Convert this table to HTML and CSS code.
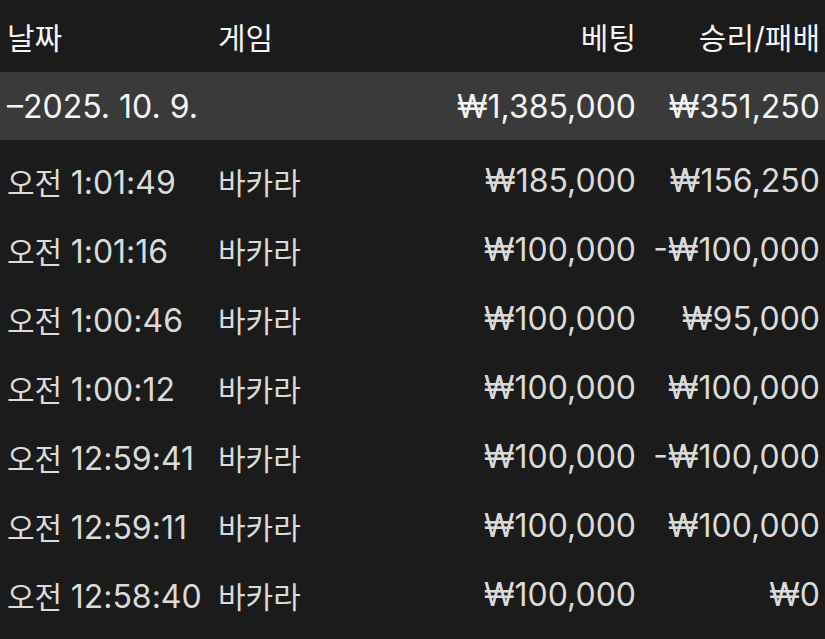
FILE: index.html
```html
<!DOCTYPE html>
<html lang="ko">
<head>
<meta charset="utf-8">
<link rel="stylesheet" href="styles.css">
</head>
<body>
<div class="table">
  <div class="row head">
    <div class="c date">날짜</div>
    <div class="c game">게임</div>
    <div class="c bet">베팅</div>
    <div class="c win">승리/패배</div>
  </div>
  <div class="row group">
    <div class="c date n">–2025. 10. 9.</div>
    <div class="c game"></div>
    <div class="c bet n">₩1,385,000</div>
    <div class="c win n">₩351,250</div>
  </div>
  <div class="rows">
    <div class="row item"><div class="c date">오전 <span class="n">1:01:49</span></div><div class="c game">바카라</div><div class="c bet n">₩185,000</div><div class="c win n">₩156,250</div></div>
    <div class="row item"><div class="c date">오전 <span class="n">1:01:16</span></div><div class="c game">바카라</div><div class="c bet n">₩100,000</div><div class="c win n">-₩100,000</div></div>
    <div class="row item"><div class="c date">오전 <span class="n">1:00:46</span></div><div class="c game">바카라</div><div class="c bet n">₩100,000</div><div class="c win n">₩95,000</div></div>
    <div class="row item"><div class="c date">오전 <span class="n">1:00:12</span></div><div class="c game">바카라</div><div class="c bet n">₩100,000</div><div class="c win n">₩100,000</div></div>
    <div class="row item"><div class="c date">오전 <span class="n">12:59:41</span></div><div class="c game">바카라</div><div class="c bet n">₩100,000</div><div class="c win n">-₩100,000</div></div>
    <div class="row item"><div class="c date">오전 <span class="n">12:59:11</span></div><div class="c game">바카라</div><div class="c bet n">₩100,000</div><div class="c win n">₩100,000</div></div>
    <div class="row item"><div class="c date">오전 <span class="n">12:58:40</span></div><div class="c game">바카라</div><div class="c bet n">₩100,000</div><div class="c win n">₩0</div></div>
  </div>
</div>
</body>
</html>
```
FILE: styles.css
```css
html, body {
  margin: 0;
  padding: 0;
  background: #1b1b1b;
  overflow: hidden;
}
body {
  font-family: Inter, "Noto Sans CJK KR", sans-serif;
  font-size: 30px;
  color: #dadada;
}
.table {
  width: 825px;
}
.row {
  display: grid;
  grid-template-columns: 211px 200px 1fr 184px;
  align-items: center;
  padding: 0 5px 0 7px;
  white-space: nowrap;
}
.n {
  font-size: 32px;
}
.head {
  height: 72px;
  color: #f4f4f4;
}
.group {
  height: 68px;
  background: #3a3a3a;
  color: #f4f4f4;
}
.rows {
  padding-top: 6px;
}
.item {
  height: 69px;
}
.bet, .win {
  text-align: right;
}
```
